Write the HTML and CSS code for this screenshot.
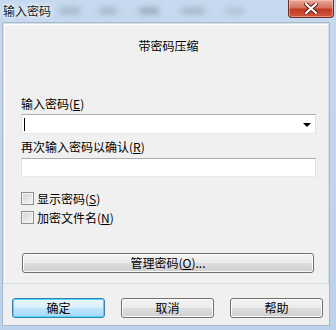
FILE: index.html
```html
<!DOCTYPE html>
<html lang="zh-CN">

<head>
    <meta charset="UTF-8">
    <title>输入密码</title>
    <link rel="stylesheet" href="styles.css">
</head>

<body>
    <div class="window">
        <div class="titlebar">
            <span class="title">输入密码</span>
            <span class="blur b1"></span>
            <span class="blur b2"></span>
            <span class="blur b3"></span>
            <span class="blur b4"></span>
            <span class="blur b5"></span>
            <button class="close" type="button">
                <svg width="14" height="11" viewBox="0 0 14 11">
                    <path d="M2 1 L12 10 M12 1 L2 10" stroke="#5a1a12" stroke-width="4" stroke-linecap="square"/>
                    <path d="M2 1 L12 10 M12 1 L2 10" stroke="#fff" stroke-width="2.2" stroke-linecap="square"/>
                </svg>
            </button>
        </div>

        <div class="client">
            <div class="group">
                <div class="group-title">带密码压缩</div>

                <label class="field-label">输入密码(<u>E</u>)</label>
                <div class="combo">
                    <span class="caret"></span>
                    <span class="arrow"></span>
                </div>

                <label class="field-label">再次输入密码以确认(<u>R</u>)</label>
                <div class="textbox"></div>

                <div class="checks">
                    <label class="check"><span class="box"></span>显示密码(<u>S</u>)</label>
                    <label class="check"><span class="box"></span>加密文件名(<u>N</u>)</label>
                </div>

                <button class="btn wide" type="button">管理密码(<u>O</u>)...</button>
            </div>

            <div class="actions">
                <button class="btn default" type="button">确定</button>
                <button class="btn" type="button">取消</button>
                <button class="btn" type="button">帮助</button>
            </div>
        </div>
    </div>
</body>
</html>
```

FILE: styles.css
```css
body {
    margin: 0;
    padding: 0;
    font-family: "Noto Sans CJK SC", "Liberation Sans", sans-serif;
    font-size: 12px;
    color: #000;
}

.window {
    width: 336px;
    height: 330px;
    display: flex;
    flex-direction: column;
    background: linear-gradient(#c6d9ee, #bcd2ea);
    box-sizing: border-box;
    padding: 0 6px 4px 2px;
}

.titlebar {
    height: 22px;
    display: flex;
    align-items: flex-start;
    margin-right: -6px;
}

.title {
    padding: 3px 0 0 1px;
    line-height: 16px;
    color: #141c26;
    text-shadow: 0 0 6px #fff, 0 0 4px #fff;
}

.blur {
    height: 6px;
    margin-top: 8px;
    background: #7d8b9c;
    border-radius: 3px;
    filter: blur(3px);
    opacity: 0.5;
}

.b1 { width: 22px; margin-left: 8px; }
.b2 { width: 18px; margin-left: 18px; }
.b3 { width: 20px; margin-left: 22px; opacity: 0.7; }
.b4 { width: 24px; margin-left: 22px; }
.b5 { width: 20px; margin-left: 20px; opacity: 0.35; }

.close {
    margin-left: auto;
    margin-right: 2px;
    width: 46px;
    height: 18px;
    padding: 0;
    border: 1px solid #6b2a22;
    border-top: none;
    border-radius: 0 0 4px 4px;
    background: linear-gradient(#e9a99b 0%, #d5715f 45%, #c23b25 55%, #d1563a 100%);
    box-shadow: inset 0 0 0 1px rgba(255, 210, 200, 0.5);
    display: flex;
    align-items: center;
    justify-content: center;
}

.client {
    flex: 1;
    background: #f0f0f0;
    border: 1px solid #a9b8ca;
    display: flex;
    flex-direction: column;
}

.group {
    border: 1px solid #d5dfe5;
    box-shadow: inset 1px 1px 0 #fff;
    height: 261px;
    box-sizing: border-box;
    padding: 0 12px 0 17px;
    display: flex;
    flex-direction: column;
}

.group-title {
    text-align: center;
    line-height: 16px;
    margin-top: 14px;
}

.field-label {
    display: block;
    line-height: 16px;
}

.field-label:first-of-type {
    margin-top: 42px;
}

.combo,
.textbox {
    background: #fff;
    border: 1px solid #abadb3;
    border-left-color: #e2e3ea;
    border-right-color: #dbdfe6;
    border-bottom-color: #e3e9ef;
    box-sizing: border-box;
    margin-top: 1px;
}

.combo {
    height: 20px;
    margin-top: 2px;
    margin-bottom: 5px;
    display: flex;
    align-items: center;
    padding: 0 4px 0 2px;
}

.caret {
    width: 1px;
    height: 13px;
    background: #000;
}

.arrow {
    margin-left: auto;
    width: 0;
    height: 0;
    border-left: 4px solid transparent;
    border-right: 4px solid transparent;
    border-top: 4px solid #000;
    margin-top: 2px;
}

.textbox {
    height: 19px;
    margin-top: 3px;
}

.checks {
    margin-top: 15px;
    display: flex;
    flex-direction: column;
    gap: 6px;
}

.check {
    display: flex;
    align-items: center;
    line-height: 13px;
}

.box {
    width: 13px;
    height: 13px;
    box-sizing: border-box;
    border: 1px solid #8e8f8f;
    background: linear-gradient(135deg, #d3d5d8, #f5f5f6);
    box-shadow: inset 0 0 0 1px #f4f4f4;
    margin-right: 3px;
}

.btn {
    font-family: inherit;
    font-size: 12px;
    color: #000;
    height: 20px;
    padding: 0;
    border: 1px solid #707070;
    border-radius: 3px;
    background: linear-gradient(#f2f2f2 0%, #ebebeb 50%, #dddddd 51%, #cfcfcf 100%);
    box-shadow: inset 0 0 0 1px #fcfcfc;
    line-height: 16px;
}

.wide {
    margin-top: 29px;
    width: 292px;
    margin-left: 1px;
}

.actions {
    display: flex;
    gap: 16px;
    padding: 14px 0 0 9px;
}

.actions .btn {
    width: 93px;
}

.btn.default {
    border-color: #3c7fb1;
    background: linear-gradient(#eaf6fd 0%, #d9f0fc 50%, #bee6fd 51%, #a7d9f5 100%);
    box-shadow: inset 0 0 0 1px #48d8fb;
}
```
